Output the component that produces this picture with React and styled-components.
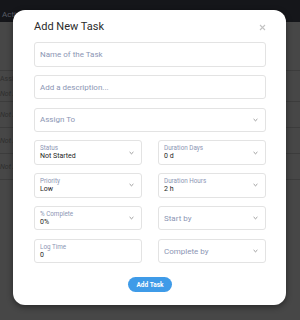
import React from 'react';
import styled, { createGlobalStyle } from 'styled-components';

const GlobalStyle = createGlobalStyle`
  html, body {
    margin: 0;
    padding: 0;
  }
  body {
    width: 300px;
    height: 320px;
    overflow: hidden;
    background: #474747;
    font-family: Roboto, "Liberation Sans", Arial, sans-serif;
  }
`;

const Page = styled.div`
  position: relative;
  width: 300px;
  height: 320px;
  overflow: hidden;
  background: #474747;
`;

const TopBar = styled.div`
  height: 22px;
  box-sizing: border-box;
  padding: 6px 0 0 2px;
  background: #15161a;
  display: flex;
  align-items: center;
  font-size: 8px;
  color: #5a5d66;
`;

const BgTable = styled.div`
  padding-top: 48px;
`;

const BgHead = styled.div`
  height: 16px;
  border-top: 1px solid #3c3c3c;
  display: flex;
  align-items: center;
  font-size: 7px;
  color: #2e2e2e;
`;

const BgRow = styled.div`
  height: ${(p) => p.$h || 25}px;
  border-bottom: 1px solid #3c3c3c;
  display: flex;
  align-items: center;
  font-size: 7px;
  font-style: italic;
  color: #2e2e2e;
`;

const Modal = styled.div`
  position: absolute;
  left: 13px;
  top: 10px;
  width: 273px;
  height: 295px;
  box-sizing: border-box;
  padding: 10px 20px 0 21px;
  background: #ffffff;
  border-radius: 12px;
  box-shadow: 0 2px 6px rgba(0, 0, 0, 0.45);
`;

const Header = styled.div`
  height: 14px;
  display: flex;
  align-items: center;
  justify-content: space-between;
  margin-bottom: 8px;
`;

const Title = styled.h2`
  margin: 0;
  font-size: 11px;
  font-weight: 400;
  color: #2b2b2b;
  line-height: 14px;
`;

const Close = styled.button`
  border: none;
  background: none;
  padding: 0;
  width: 7px;
  height: 7px;
  display: flex;
`;

const Fields = styled.div`
  display: grid;
  grid-template-columns: 1fr 1fr;
  column-gap: 16px;
  row-gap: 8.3px;
`;

const Box = styled.div`
  grid-column: ${(p) => (p.$wide ? '1 / -1' : 'auto')};
  height: 24.5px;
  box-sizing: border-box;
  border: 1px solid #e3e3e3;
  border-radius: 3px;
  padding: 0 7px 0 5px;
  display: flex;
  align-items: center;
  justify-content: space-between;
`;

const Placeholder = styled.span`
  font-size: 8px;
  color: #8c96b4;
`;

const Stack = styled.div`
  display: flex;
  flex-direction: column;
`;

const Label = styled.span`
  font-size: 6.3px;
  line-height: 8px;
  color: #8c96b4;
`;

const Value = styled.span`
  font-size: 7px;
  line-height: 9px;
  color: #1e1e1e;
`;

const Footer = styled.div`
  display: flex;
  justify-content: center;
  margin-top: 14px;
`;

const Button = styled.button`
  width: 44px;
  height: 15px;
  border: none;
  border-radius: 8px;
  background: #3f9be8;
  color: #ffffff;
  font-family: inherit;
  font-size: 6.5px;
  font-weight: 700;
  padding: 0;
`;

const Chevron = () => (
  <svg width="5" height="4" viewBox="0 0 5 4">
    <path d="M0.6 1 L2.5 2.8 L4.4 1" fill="none" stroke="#858585" strokeWidth="0.85" />
  </svg>
);

const Field = ({ wide, label, value, placeholder, select }) => (
  <Box $wide={wide}>
    {label ? (
      <Stack>
        <Label>{label}</Label>
        <Value>{value}</Value>
      </Stack>
    ) : (
      <Placeholder>{placeholder}</Placeholder>
    )}
    {select && <Chevron />}
  </Box>
);

export default function App() {
  return (
    <Page>
      <GlobalStyle />
      <TopBar>Activity</TopBar>
      <BgTable>
        <BgHead>Assigned To</BgHead>
        <BgRow $h={14}>Not Assigned</BgRow>
        <BgRow>Not Assigned</BgRow>
        <BgRow>Not Assigned</BgRow>
        <BgRow>Not Assigned</BgRow>
      </BgTable>

      <Modal>
        <Header>
          <Title>Add New Task</Title>
          <Close aria-label="close">
            <svg width="7" height="7" viewBox="0 0 7 7">
              <path d="M1 1 L6 6 M6 1 L1 6" stroke="#c3c3c3" strokeWidth="1.1" />
            </svg>
          </Close>
        </Header>

        <Fields>
          <Field wide placeholder="Name of the Task" />
          <Field wide placeholder="Add a description..." />
          <Field wide placeholder="Assign To" select />
          <Field label="Status" value="Not Started" select />
          <Field label="Duration Days" value="0 d" select />
          <Field label="Priority" value="Low" select />
          <Field label="Duration Hours" value="2 h" select />
          <Field label="% Complete" value="0%" select />
          <Field placeholder="Start by" select />
          <Field label="Log Time" value="0" />
          <Field placeholder="Complete by" select />
        </Fields>

        <Footer>
          <Button>Add Task</Button>
        </Footer>
      </Modal>
    </Page>
  );
}
